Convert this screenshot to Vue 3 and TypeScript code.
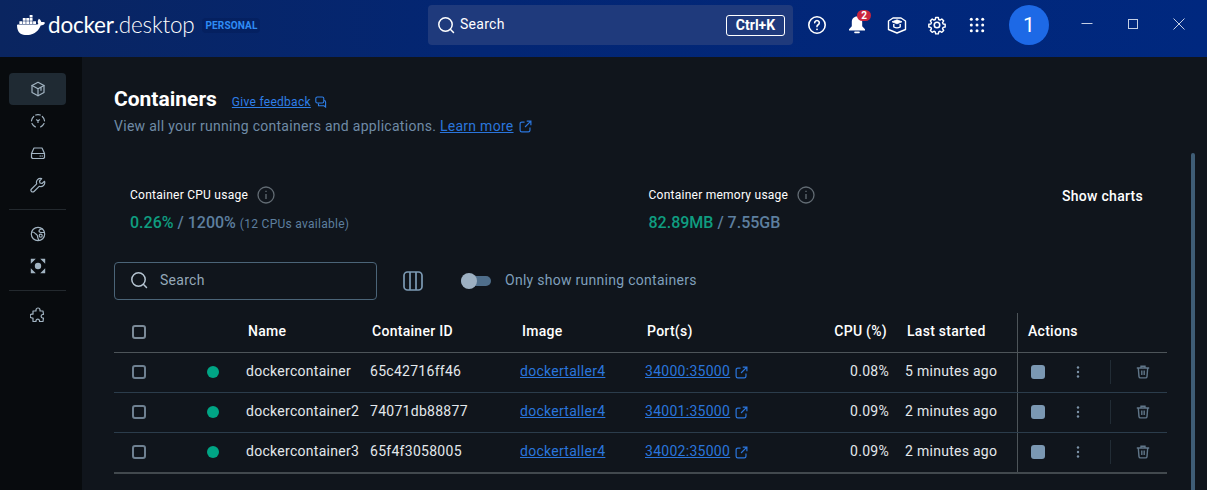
<template>
  <div class="app">
    <header class="topbar">
      <div class="brand">
        <svg class="whale" viewBox="0 0 24 24" fill="#fff"><path d="M13.983 11.078h2.119a.186.186 0 00.186-.185V9.006a.186.186 0 00-.186-.186h-2.119a.185.185 0 00-.185.185v1.888c0 .102.083.185.185.185m-2.954-5.43h2.118a.186.186 0 00.186-.186V3.574a.186.186 0 00-.186-.185h-2.118a.185.185 0 00-.185.185v1.888c0 .102.082.185.185.186m0 2.716h2.118a.187.187 0 00.186-.186V6.29a.186.186 0 00-.186-.185h-2.118a.185.185 0 00-.185.185v1.887c0 .102.082.185.185.186m-2.93 0h2.12a.186.186 0 00.184-.186V6.29a.185.185 0 00-.185-.185H8.1a.185.185 0 00-.185.185v1.887c0 .102.083.185.185.186m-2.964 0h2.119a.186.186 0 00.185-.186V6.29a.185.185 0 00-.185-.185H5.136a.186.186 0 00-.186.185v1.887c0 .102.084.185.186.186m5.893 2.715h2.118a.186.186 0 00.186-.185V9.006a.186.186 0 00-.186-.186h-2.118a.185.185 0 00-.185.185v1.888c0 .102.082.185.185.185m-2.93 0h2.12a.185.185 0 00.184-.185V9.006a.185.185 0 00-.184-.186h-2.12a.185.185 0 00-.184.185v1.888c0 .102.083.185.185.185m-2.964 0h2.119a.185.185 0 00.185-.185V9.006a.185.185 0 00-.184-.186h-2.12a.186.186 0 00-.186.186v1.887c0 .102.084.185.186.185m-2.92 0h2.12a.185.185 0 00.184-.185V9.006a.185.185 0 00-.184-.186h-2.12a.185.185 0 00-.184.185v1.888c0 .102.082.185.185.185M23.763 9.89c-.065-.051-.672-.51-1.954-.51-.338.001-.676.03-1.01.087-.248-1.7-1.653-2.53-1.716-2.566l-.344-.199-.226.327c-.284.438-.49.922-.612 1.43-.23.97-.09 1.882.403 2.661-.595.332-1.55.413-1.744.42H.751a.751.751 0 00-.75.748 11.376 11.376 0 00.692 4.062c.545 1.428 1.355 2.48 2.41 3.124 1.18.723 3.1 1.137 5.275 1.137.983.003 1.963-.086 2.93-.266a12.248 12.248 0 003.823-1.389c.98-.567 1.86-1.288 2.61-2.136 1.252-1.418 1.998-2.997 2.553-4.4h.221c1.372 0 2.215-.549 2.68-1.009.309-.293.55-.65.707-1.046l.098-.288Z"/></svg>
        <span class="wordmark"><span class="wm-a">docker</span><span class="wm-b">.desktop</span></span>
        <span class="plan">PERSONAL</span>
      </div>
      <div class="global-search">
        <svg class="i18" viewBox="0 0 18 18" fill="none" stroke="#fff" stroke-width="1.5"><circle cx="8.5" cy="8.5" r="6.7"/><path d="M13.3 13.3 16.5 16.5" stroke-linecap="round"/></svg>
        <span class="gs-text">Search</span>
        <span class="kbd">Ctrl+K</span>
      </div>
      <div class="top-icons">
        <svg class="ti" viewBox="0 0 20 20" fill="none" stroke="#fff" stroke-width="1.6"><circle cx="10" cy="10" r="8.2"/><path d="M7.7 7.8a2.3 2.3 0 1 1 3.5 2c-.8.5-1.2 1-1.2 1.8" stroke-linecap="round"/><circle cx="10" cy="14.3" r=".9" fill="#fff" stroke="none"/></svg>
        <span class="bell">
          <svg class="ti" viewBox="0 0 20 20" fill="#fff"><path d="M10 1.4c-3.100 0-5.200 2.400-5.200 5.400v4.400L2 14.200v1.300h16v-1.300l-2.800-3V6.800c0-3-2.100-5.400-5.200-5.400Z"/><rect x="7.200" y="16.600" width="5.600" height="1.600" rx=".8"/></svg>
          <span class="badge">2</span>
        </span>
        <svg class="ti" viewBox="0 0 20 20" fill="none" stroke="#fff" stroke-width="1.4" stroke-linejoin="round"><path d="M1.500 6 6 3h8l4.500 3v8.500L10 18l-8.500-3.500Z"/><path d="M5 6.800 10 4.800l5 2-5 2Z" fill="#fff" stroke-width=".8"/><path d="M6.800 9v3c2 1.100 4.400 1.100 6.400 0V9"/></svg>
        <svg class="ti" viewBox="0 0 24 24" fill="none" stroke="#fff" stroke-width="1.9" stroke-linejoin="round"><circle cx="12" cy="12" r="3.300"/><path d="M10.200 2.500h3.600l.5 2.700 1.800.8 2.300-1.500 2.500 2.500-1.500 2.300.8 1.800 2.700.5v3.600l-2.700.5-.8 1.800 1.500 2.300-2.500 2.500-2.300-1.500-1.800.8-.5 2.700h-3.600l-.5-2.700-1.800-.8-2.300 1.500-2.500-2.500 1.500-2.300-.8-1.800-2.700-.5v-3.600l2.700-.5.8-1.800-1.500-2.300 2.500-2.500 2.300 1.500 1.800-.8Z" transform="translate(12 12) scale(.9) translate(-12 -12.500)"/></svg>
        <svg class="ti" viewBox="0 0 20 20" fill="#fff"><template v-for="y in [4.300, 10, 15.700]" :key="y"><circle v-for="x in [4.300, 10, 15.700]" :key="x" :cx="x" :cy="y" r="1.500"/></template></svg>
      </div>
      <div class="avatar">1</div>
      <div class="win">
        <svg class="wb" viewBox="0 0 12 12" stroke="#c4cfe4" fill="none"><path d="M.5 5.500h11"/></svg>
        <svg class="wb" viewBox="0 0 12 12" stroke="#c4cfe4" fill="none"><rect x="1.500" y="1.500" width="9" height="9"/></svg>
        <svg class="wb" viewBox="0 0 12 12" stroke="#c4cfe4" fill="none"><path d="M.5.500l11 11M11.500.500l-11 11"/></svg>
      </div>
    </header>

    <div class="body">
      <aside class="side">
        <div class="nav active">
          <svg class="ni" viewBox="0 0 16 16"><path d="M8 1.300 14 4.500v7L8 14.700 2 11.500v-7Z"/><path d="M2 4.500 8 7.800l6-3.300M8 7.800v6.900M11 6.300v3"/></svg>
        </div>
        <div class="nav">
          <svg class="ni" viewBox="0 0 16 16"><path d="M5.700 2a6.500 6.500 0 0 1 4.600 0M12.300 3.500a6.500 6.500 0 0 1 2.200 4.300M14 10.600a6.500 6.500 0 0 1-3.300 3.300M5.300 13.900A6.500 6.500 0 0 1 2 10.600M1.500 7.800a6.500 6.500 0 0 1 2.200-4.300"/><path d="M6.500 6.800 8 7.700l1.500-.9M8 7.700v1.800"/></svg>
        </div>
        <div class="nav">
          <svg class="ni" viewBox="0 0 16 16"><path d="M1.500 8.500 4 3h8l2.500 5.500v4l-1 1h-11l-1-1Z"/><path d="M1.500 8.500h13M10 11h.5M12 11h.5"/></svg>
        </div>
        <div class="nav">
          <svg class="ni" viewBox="0 0 16 16"><path d="M14.500 4.300 12 6.500 10 6 9.500 4l2.200-2.400a4 4 0 0 0-5 5.200L1.500 12a1.700 1.700 0 0 0 2.500 2.500L9.200 9.300a4 4 0 0 0 5.300-5Z"/></svg>
        </div>
        <div class="rule"></div>
        <div class="nav">
          <svg class="ni" viewBox="0 0 16 16"><circle cx="8" cy="8" r="6.700"/><path d="M1.800 6c2 0 3 .6 3.700 1.700.8 1 2 1 2 2.300 0 1.500.8 3 1.300 4.500M12.500 3C10.500 2.700 9 3.800 9 5s1.500 1.500 3 1.500h2.500"/><circle cx="10.700" cy="9.700" r="1.500"/></svg>
        </div>
        <div class="nav">
          <svg class="ni fillme" viewBox="0 0 16 16"><circle cx="8" cy="8" r="3.200"/><path d="M.8.800h5L.8 5.800ZM15.200.800h-5l5 5ZM.8 15.200h5l-5-5ZM15.200 15.200h-5l5-5Z"/></svg>
        </div>
        <div class="rule"></div>
        <div class="nav">
          <svg class="ni" viewBox="0 0 16 16"><path d="M6 3a2 2 0 1 1 4 0v1h3l.5 3.500h-1a1.800 1.800 0 0 0 0 3.500h1L13 14.500H9.500v-1a1.800 1.800 0 0 0-3.500 0v1H3V11H2a1.900 1.900 0 0 1 0-3.800h1V4h3Z"/></svg>
        </div>
      </aside>

      <main class="main">
        <div class="title-row">
          <h1>Containers</h1>
          <a class="feedback">Give feedback</a>
          <svg class="fb" viewBox="0 0 12 12" fill="none" stroke="#2e7fe8" stroke-width="1.100"><rect x=".8" y="1" width="8" height="6" rx="1.500"/><path d="M3.500 7.500v2.200h5.500l1.600 1.300V6a1.500 1.500 0 0 0-1.500-1.500"/></svg>
        </div>
        <p class="sub">View all your running containers and applications. <a>Learn more</a><svg class="ext sub-ext" viewBox="0 0 14 14"><path d="M6 2.200H3A1.800 1.800 0 0 0 1.200 4v7A1.800 1.800 0 0 0 3 12.800h7A1.800 1.800 0 0 0 11.800 11V8M8.300 1.200h4.500v4.500M12.500 1.500 6.500 7.500"/></svg></p>

        <div class="stats">
          <div class="stat cpu">
            <div class="stat-label">Container CPU usage <svg class="info" viewBox="0 0 18 18"><circle cx="9" cy="9" r="8"/><path d="M9 8v5M9 4.800v1.200"/></svg></div>
            <div class="stat-val"><span class="ok">0.26%</span> / 1200% <small>(12 CPUs available)</small></div>
          </div>
          <div class="stat mem">
            <div class="stat-label">Container memory usage <svg class="info" viewBox="0 0 18 18"><circle cx="9" cy="9" r="8"/><path d="M9 8v5M9 4.800v1.200"/></svg></div>
            <div class="stat-val"><span class="ok">82.89MB</span> / 7.55GB</div>
          </div>
          <span class="charts">Show charts</span>
        </div>

        <div class="toolbar">
          <label class="search">
            <svg class="i18" viewBox="0 0 18 18" fill="none" stroke="#b5c4d1" stroke-width="1.500"><circle cx="8.500" cy="8.500" r="6.700"/><path d="M13.300 13.300 16.500 16.500" stroke-linecap="round"/></svg>
            <span>Search</span>
          </label>
          <svg class="cols" viewBox="0 0 20 20" fill="none" stroke="#7c9ab4" stroke-width="1.700"><rect x="1" y="1" width="18" height="18" rx="3.500"/><path d="M7 1v18M13 1v18"/></svg>
          <span class="toggle"><i></i></span>
          <span class="toggle-label">Only show running containers</span>
        </div>

        <div class="table">
          <div class="row head">
            <div class="c-check"><span class="check"></span></div>
            <div></div>
            <div>Name</div>
            <div>Container ID</div>
            <div>Image</div>
            <div>Port(s)</div>
            <div class="c-cpu">CPU (%)</div>
            <div class="c-last">Last started</div>
            <div class="c-act">Actions</div>
          </div>
          <div v-for="c in containers" :key="c.id" class="row item">
            <div class="c-check"><span class="check"></span></div>
            <div class="c-dot"><span class="dot"></span></div>
            <div class="txt">{{ c.name }}</div>
            <div class="txt">{{ c.id }}</div>
            <div class="txt"><a>{{ c.image }}</a></div>
            <div class="txt c-port"><a>{{ c.port }}</a><svg class="ext" viewBox="0 0 14 14"><path d="M6 2.200H3A1.800 1.800 0 0 0 1.200 4v7A1.800 1.800 0 0 0 3 12.800h7A1.800 1.800 0 0 0 11.800 11V8M8.300 1.200h4.500v4.500M12.500 1.500 6.500 7.500"/></svg></div>
            <div class="txt c-cpu">{{ c.cpu }}</div>
            <div class="txt c-last">{{ c.last }}</div>
            <div class="c-act">
              <span class="stop"></span>
              <svg class="kebab" viewBox="0 0 4 14" fill="#7c93a8"><circle cx="2" cy="2.500" r="1.200"/><circle cx="2" cy="7" r="1.200"/><circle cx="2" cy="11.500" r="1.200"/></svg>
              <span class="act-sep"></span>
              <svg class="trash" viewBox="0 0 14 14" fill="none" stroke="#607689" stroke-width="1.400"><path d="M.8 3h12.400M5 3V1.200h4V3M2.300 3l.7 8.600a1.500 1.500 0 0 0 1.500 1.300h5a1.500 1.500 0 0 0 1.500-1.300L11.700 3M5.800 5.500v4.500M8.200 5.500v4.500"/></svg>
            </div>
          </div>
        </div>
        <div class="scrollbar"></div>
      </main>
    </div>
  </div>
</template>

<script setup lang="ts">
interface Container { name: string; id: string; image: string; port: string; cpu: string; last: string }
const containers: Container[] = [
  { name: 'dockercontainer', id: '65c42716ff46', image: 'dockertaller4', port: '34000:35000', cpu: '0.08%', last: '5 minutes ago' },
  { name: 'dockercontainer2', id: '74071db88877', image: 'dockertaller4', port: '34001:35000', cpu: '0.09%', last: '2 minutes ago' },
  { name: 'dockercontainer3', id: '65f4f3058005', image: 'dockertaller4', port: '34002:35000', cpu: '0.09%', last: '2 minutes ago' },
]
</script>

<style>
html, body { margin: 0; background: #10151c; overflow: hidden; }
</style>

<style scoped>
.app { width: 1207px; height: 490px; overflow: hidden; display: flex; flex-direction: column; font-family: Roboto, "Liberation Sans", sans-serif; font-size: 14px; letter-spacing: .28px; color: #e3e8ec; }
.topbar { height: 57px; flex: none; display: flex; align-items: flex-start; background: linear-gradient(90deg, #0a2560 0%, #032674 40%, #00287f 100%); }
.brand { width: 428px; height: 50px; padding-left: 17px; box-sizing: border-box; display: flex; align-items: center; }
.whale { width: 28px; height: 28px; flex: none; margin-top: -1px; }
.wordmark { margin-left: 3px; font-family: Lato, sans-serif; font-size: 22.500px; color: #fff; line-height: 28px; letter-spacing: -.2px; }
.wm-a { font-weight: 400; }
.wm-b { font-weight: 300; }
.plan { margin-left: 8px; padding: 2px 3px; border-radius: 4px; background: rgba(0, 20, 70, .25); font-size: 10px; font-weight: 700; letter-spacing: .15px; color: #2f8cf5; }
.global-search { width: 365px; height: 40px; margin-top: 5px; flex: none; box-sizing: border-box; padding: 0 8px 0 9px; background: #1f3a7c; border-radius: 4px; display: flex; align-items: center; color: #fff; }
.i18 { width: 18px; height: 18px; flex: none; }
.gs-text { margin-left: 5px; padding-bottom: 2px; flex: 1; }
.kbd { width: 59px; height: 21px; box-sizing: border-box; border: 1px solid #fff; border-radius: 3px; text-align: center; line-height: 19px; font-weight: 700; letter-spacing: 0; }
.top-icons { margin-left: 14px; height: 50px; display: flex; align-items: center; gap: 20px; }
.ti { width: 20px; height: 20px; display: block; }
.bell { position: relative; display: block; }
.badge { position: absolute; left: 10px; top: -5px; width: 14px; height: 11px; border-radius: 6px; background: #c9253e; color: #fff; font-size: 10px; font-weight: 700; line-height: 11px; text-align: center; letter-spacing: 0; }
.avatar { width: 40px; height: 40px; margin: 5px 0 0 22px; flex: none; border-radius: 50%; background: #1d69e6; color: #fff; font-size: 21px; line-height: 40px; text-align: center; letter-spacing: 0; }
.win { margin-left: 32px; height: 48px; display: flex; align-items: center; gap: 34px; }
.wb { width: 12px; height: 12px; }

.body { flex: 1; display: flex; min-height: 0; }
.side { width: 82px; flex: none; box-sizing: border-box; padding: 16px 16px 0 9px; background: #080b0e; }
.nav { height: 32px; display: flex; align-items: center; justify-content: center; border-radius: 4px; }
.nav.active { background: #1f2a33; }
.ni { width: 16px; height: 16px; fill: none; stroke: #a2b4c2; stroke-width: 1.200; stroke-linejoin: round; stroke-linecap: round; }
.ni.fillme { fill: #a2b4c2; stroke: none; }
.rule { height: 1px; margin: 8px 0; background: #23292e; }

.main { flex: 1; position: relative; box-sizing: border-box; padding: 30px 40px 0 32px; background: #10151c; }
.title-row { height: 24px; display: flex; align-items: center; }
h1 { margin: 0; font-size: 21px; font-weight: 700; color: #fff; line-height: 24px; letter-spacing: 0; }
.feedback { margin: 6px 0 0 15px; font-size: 12px; color: #2e7fe8; text-decoration: underline; }
.fb { width: 12px; height: 12px; margin: 6px 0 0 4px; }
.sub { margin: 5px 0 0; height: 20px; line-height: 20px; color: #6f8ba6; }
.sub a, .item a { color: #2a75dc; text-decoration: underline; }
.ext { width: 13px; height: 13px; fill: none; stroke: #2a75dc; stroke-width: 1.300; }
.sub-ext { margin-left: 5px; vertical-align: -2px; }
.stats { margin-top: 49px; padding-left: 16px; display: grid; grid-template-columns: 518.500px 1fr auto; }
.stat-label { height: 20px; display: flex; align-items: center; font-size: 12px; letter-spacing: .25px; color: #fff; }
.info { width: 18px; height: 18px; margin-left: 9px; fill: none; stroke: #626b73; stroke-width: 1.300; }
.stat-val { margin-top: 8px; height: 20px; font-size: 16px; line-height: 20px; font-weight: 500; letter-spacing: 0; color: #5d7f9f; }
.stat-val small { font-size: 12px; font-weight: 400; letter-spacing: .28px; }
.ok { color: #0f9d80; }
.charts { font-weight: 500; color: #fff; line-height: 20px; margin: 1px 24px 0 0; }
.toolbar { margin-top: 29px; height: 38px; display: flex; align-items: center; }
.search { width: 263px; height: 38px; box-sizing: border-box; border: 1px solid #4b6478; border-radius: 4px; padding: 0 0 2px 15px; display: flex; align-items: center; gap: 12px; color: #94a8b8; }
.cols { width: 20px; height: 20px; margin-left: 26px; }
.toggle { position: relative; width: 30px; height: 10px; margin-left: 38px; border-radius: 5px; background: #4f6e8b; }
.toggle i { position: absolute; left: 0; top: -3px; width: 16px; height: 16px; border-radius: 50%; background: #9db0c2; }
.toggle-label { margin-left: 14px; padding-bottom: 2px; color: #7f9fbb; }
.table { margin-top: 13px; width: 1053px; border-bottom: 2px solid #42494e; }
.row { display: grid; grid-template-columns: 50px 82px 124px 150px 125px 125px 119px 128px 150px; align-items: stretch; }
.row > div { display: flex; align-items: center; min-width: 0; white-space: nowrap; }
.head { height: 39px; border-bottom: 1px solid #4d5459; font-weight: 500; color: #fff; }
.head > div { padding-left: 2px; padding-bottom: 4px; }
.item { height: 39px; border-bottom: 1px solid #2b3c4b; }
.item:last-child { border-bottom: 0; }
.item .txt { padding-bottom: 4px; }
.table .c-check { justify-content: center; padding: 0 0 1px; }
.check { width: 14px; height: 14px; box-sizing: border-box; border: 2px solid #6e8091; border-radius: 3px; }
.head .check { border-color: #7b8a98; }
.table .c-dot { justify-content: center; padding: 0 0 1px 16px; }
.dot { width: 12px; height: 12px; border-radius: 50%; background: #00a585; }
.c-port { gap: 5px; }
.c-port .ext { margin-top: 4px; }
.table .c-cpu { justify-content: flex-end; }
.head .c-cpu { padding-left: 0; padding-right: 2px; }
.table .c-last { padding-left: 16px; }
.head .c-last { padding-left: 18px; }
.table .c-act { border-left: 1px solid #4d5459; padding-left: 10px; }
.item .c-act { padding: 0 0 1px 13px; }
.stop { width: 14px; height: 14px; border-radius: 3px; background: #7b98b3; flex: none; }
.kebab { width: 4px; height: 14px; margin-left: 31px; flex: none; }
.act-sep { width: 1px; height: 24px; margin-left: 30px; background: #222c35; flex: none; }
.trash { width: 14px; height: 14px; margin-left: 25px; flex: none; }
.scrollbar { position: absolute; right: 12px; top: 96px; bottom: -2px; width: 4px; border-radius: 2px 2px 0 0; background: #3f5d76; }
</style>
